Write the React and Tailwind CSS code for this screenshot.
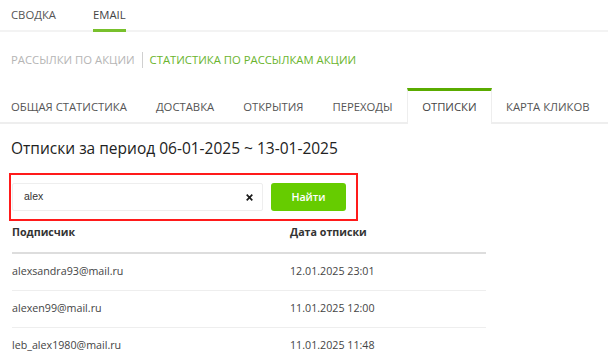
const subTabs = [
  { label: "ОБЩАЯ СТАТИСТИКА" },
  { label: "ДОСТАВКА" },
  { label: "ОТКРЫТИЯ" },
  { label: "ПЕРЕХОДЫ" },
  { label: "ОТПИСКИ", active: true },
  { label: "КАРТА КЛИКОВ" },
];

const rows = [
  { email: "alexsandra93@mail.ru", date: "12.01.2025 23:01" },
  { email: "alexen99@mail.ru", date: "11.01.2025 12:00" },
  { email: "leb_alex1980@mail.ru", date: "11.01.2025 11:48" },
];

export default function App() {
  return (
    <div className="w-[608px] h-[364px] overflow-hidden bg-white text-[#333] font-['Open_Sans',sans-serif]">
      {/* top tabs */}
      <div className="flex h-[32px] border-b-2 border-[#f3f3f3] px-[11px] gap-[37px] text-[11.3px] leading-[17px] text-[#555] whitespace-nowrap">
        <div className="pt-[6px]">СВОДКА</div>
        <div className="pt-[6px] border-b-[3px] border-[#78c02c] mb-[-2px] text-[#444]">EMAIL</div>
      </div>

      {/* breadcrumbs */}
      <div className="flex items-center h-[18px] mt-[19px] px-[11px] text-[11.3px] leading-[18px] whitespace-nowrap">
        <span className="text-[#b5b5b5]">РАССЫЛКИ ПО АКЦИИ</span>
        <span className="mx-[7px] w-px h-[16px] bg-[#d0d0d0]"></span>
        <span className="text-[#6ab42d]">СТАТИСТИКА ПО РАССЫЛКАМ АКЦИИ</span>
      </div>

      {/* sub tabs */}
      <div className="flex mt-[19px] h-[36px] ml-[-3.5px] border-b-2 border-[#eeeeee] text-[11.3px] leading-[17px] text-[#555] whitespace-nowrap">
        {subTabs.map((t) =>
          t.active ? (
            <div
              key={t.label}
              className="px-[14px] pt-[6.5px] border-t-[3px] border-t-[#5aab00] border-x border-x-[#eeeeee] bg-white mb-[-2px] text-[#444]"
            >
              {t.label}
            </div>
          ) : (
            <div key={t.label} className="px-[14.5px] pt-[9.5px]">
              {t.label}
            </div>
          )
        )}
      </div>

      <h1 className="px-[11px] pt-[13px] text-[15.5px] leading-[22px] text-[#222]">
        Отписки за период 06-01-2025 ~ 13-01-2025
      </h1>

      {/* search */}
      <div className="ml-[9px] mt-[14px] w-[349px] h-[48px] border-2 border-[#ff1a1a] flex items-center pl-[1px] gap-[8px]">
        <div className="flex items-center w-[251px] h-[28px] border border-[#eeeeee] rounded-[2px] pl-[11px] pr-[9px] font-['Liberation_Sans',sans-serif] text-[10.5px] text-[#333]">
          <span className="flex-1">alex</span>
          <svg width="7" height="7" viewBox="0 0 10 10">
            <path d="M1 1L9 9M9 1L1 9" stroke="#1a1a1a" strokeWidth="2.4" />
          </svg>
        </div>
        <button className="w-[75px] h-[28px] rounded-[3px] bg-[#66cc00] text-white text-[10.7px] font-semibold">
          Найти
        </button>
      </div>

      {/* table */}
      <div className="ml-[12px] w-[474px] text-[10.7px] leading-[18px]">
        <div className="flex h-[33px] mt-[0px] pt-[2px] border-b-2 border-[#dddddd] font-bold text-[#333]">
          <div className="w-[278px]">Подписчик</div>
          <div>Дата отписки</div>
        </div>
        {rows.map((r) => (
          <div key={r.email} className="flex h-[37px] pt-[8px] border-b border-[#eeeeee] text-[#444]">
            <div className="w-[278px]">{r.email}</div>
            <div>{r.date}</div>
          </div>
        ))}
      </div>
    </div>
  );
}
